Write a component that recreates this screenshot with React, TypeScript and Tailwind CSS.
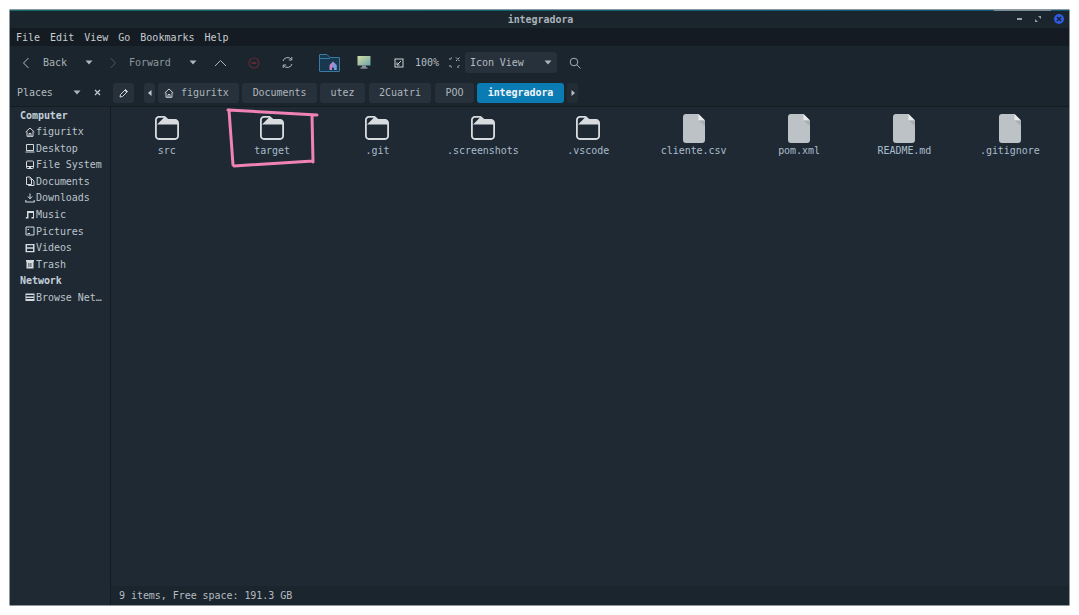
import React from "react";

const mono = "font-['DejaVu_Sans_Mono','Liberation_Mono',monospace]";

function Caret({ className = "" }: { className?: string }) {
  return (
    <svg width="8" height="5" viewBox="0 0 8 5" className={className}>
      <path d="M0.5 0.5h7L4 4.5z" fill="#aeb6bd" />
    </svg>
  );
}

function SideIcon({ name }: { name: string }) {
  const s = { fill: "none", stroke: "#d5dade", strokeWidth: 1 };
  const f = { fill: "#d5dade" };
  return (
    <svg width="10" height="10" viewBox="0 0 10 10" className="shrink-0">
      {name === "home" && <path d="M0.7 5 5 1l4.3 4M2 4.5v4.8h6V4.500M4 9.300V6.500h2v2.800" {...s} />}
      {name === "desktop" && <path d="M1.500 1.500h7v6h-7zM0.500 9h9" {...s} />}
      {name === "disk" && <path d="M2.500 1h5a1 1 0 0 1 1 1v5.500a1 1 0 0 1-1 1h-5a1 1 0 0 1-1-1V2a1 1 0 0 1 1-1zM1.500 6.500h7M4 7.500h2" {...s} />}
      {name === "docs" && <path d="M1.500 1H5L6.500 2.500V8.500H1.500zM4.500 3H7L9 5V9.500H3.500V8.500" {...s} />}
      {name === "down" && <path d="M5 .5v5M2.800 3.500 5 5.800 7.200 3.500M1 7 .5 9h9L9 7" {...s} />}
      {name === "music" && <path d="M2 1h7v7.500H6.500V7H8V3H3.500v5.500H0.800V7H2z" {...f} />}
      {name === "pic" && <path d="M1 1h8v8H1zM2.500 7.500h2.500M2.500 3.500h1.500" {...s} />}
      {name === "video" && <path fillRule="evenodd" d="M.5 1h9v8.300h-9zM2 2.300v2h6v-2zM2 5.800v2.200h6V5.800z" {...f} />}
      {name === "trash" && <path fillRule="evenodd" d="M1 1h8v1.800H8.500V9.500H1.500V2.800H1zM3.500 4v4h.8V4zM5.500 4v4h.8V4z" {...f} />}
      {name === "net" && <path fillRule="evenodd" d="M.5 1.500h9v7.500h-9zM1.300 6v1h7.400V6zM1.300 3v1.500h7.400V3z" {...f} />}
    </svg>
  );
}

function Folder() {
  return (
    <svg width="26" height="26" viewBox="0 0 26 26">
      <path d="M4.900 1.900H10.500L14 5H21a3 3 0 0 1 3.100 3V21a3 3 0 0 1-3 3H5a3 3 0 0 1-3.100-3V5a3 3 0 0 1 3-3.100z" fill="none" stroke="#d8dcdf" strokeWidth="1.800" strokeLinejoin="round" />
      <path d="M10.500 2 14 5H21a3 3 0 0 1 3.100 3V9.500H3z" fill="#d8dcdf" />
    </svg>
  );
}

function FileIcon() {
  return (
    <svg width="22" height="29" viewBox="0 0 22 29">
      <path d="M3 0h12.500L22 6.500V26a3 3 0 0 1-3 3H3a3 3 0 0 1-3-3V3a3 3 0 0 1 3-3z" fill="#bcc2c5" />
      <path d="M15.500 0 22 6.500h-6.500z" fill="#e9ebec" />
      <path d="M15.500 6.500H22V12z" fill="#a9afb3" />
    </svg>
  );
}

const places: [string, string][] = [
  ["home", "figuritx"],
  ["desktop", "Desktop"],
  ["disk", "File System"],
  ["docs", "Documents"],
  ["down", "Downloads"],
  ["music", "Music"],
  ["pic", "Pictures"],
  ["video", "Videos"],
  ["trash", "Trash"],
];

const items: [string, boolean][] = [
  ["src", true],
  ["target", true],
  [".git", true],
  [".screenshots", true],
  [".vscode", true],
  ["cliente.csv", false],
  ["pom.xml", false],
  ["README.md", false],
  [".gitignore", false],
];

const crumbs: [string, string][] = [
  ["Documents", "ml-[3px] w-[75px]"],
  ["utez", "ml-[3px] w-[45px]"],
  ["2Cuatri", "ml-[4px] w-[62px]"],
  ["POO", "ml-[4px] w-[39px]"],
];

export default function App() {
  return (
    <div className={`h-[615px] w-[1079px] overflow-hidden bg-white pl-[10px] pr-[10px] pt-[10px] ${mono} text-[10px] tracking-[-0.05px] text-[#c3cad0]`}>
      <div className="relative flex h-[595px] w-[1059px] flex-col bg-[#1f2933] shadow-[0_0_0_0.5px_#16313f]">
        <div className="h-px shrink-0 bg-gradient-to-r from-[#0e6b66] to-[#12567a]" />
        <div className="absolute left-[984px] top-0 h-px w-[57px] bg-[#7f8e98]" />
        {/* title bar */}
        <div className="flex h-[17px] shrink-0 items-center bg-[#1b252d]">
          <div className="w-[1059px] pl-[2px] text-center font-bold text-[#aab2b9]">integradora</div>
        </div>
        <div className="absolute right-[5px] top-[4px] flex items-center gap-[12px]">
          <div className="h-[1.500px] w-[5px] bg-[#9aa2a8]" />
          <svg width="6" height="6" viewBox="0 0 6 6" className="ml-[1px] mr-[1px]">
            <path d="M3 0h3v3zM0 3v3h3z" fill="#99a1a7" />
          </svg>
          <div className="flex h-[10px] w-[10px] items-center justify-center rounded-full bg-[#2f5be0]">
            <svg width="6" height="6" viewBox="0 0 6 6">
              <path d="M1 1l4 4M5 1 1 5" stroke="#16202c" strokeWidth="1.400" />
            </svg>
          </div>
        </div>
        {/* menu bar */}
        <div className="flex h-[18px] shrink-0 items-center gap-[10px] bg-[#141b22] pl-[6px] tracking-normal text-[#c6ccd1]">
          {["File", "Edit", "View", "Go", "Bookmarks", "Help"].map((m) => (
            <span key={m}>{m}</span>
          ))}
        </div>
        {/* toolbar */}
        <div className="flex h-[33px] shrink-0 items-center bg-[#1b252d] text-[#aab2b9]">
          <svg width="8" height="12" viewBox="0 0 8 12" className="ml-[12px]">
            <path d="M6.500 1 1.500 6l5 5" fill="none" stroke="#b5bcc2" strokeWidth="1" />
          </svg>
          <span className="ml-[13px] w-[24px]">Back</span>
          <Caret className="ml-[18px]" />
          <svg width="8" height="12" viewBox="0 0 8 12" className="ml-[16px]">
            <path d="M1.500 1l5 5-5 5" fill="none" stroke="#4c565f" strokeWidth="1" />
          </svg>
          <span className="ml-[12px] w-[42px] text-[#8e979e]">Forward</span>
          <Caret className="ml-[18px]" />
          <svg width="13" height="8" viewBox="0 0 13 8" className="ml-[17px]">
            <path d="M1 7 6.500 1.500 12 7" fill="none" stroke="#aeb6bc" strokeWidth="1" />
          </svg>
          <svg width="12" height="12" viewBox="0 0 12 12" className="ml-[21px]">
            <circle cx="6" cy="6" r="5" fill="none" stroke="#5e2a36" strokeWidth="1.200" />
            <path d="M3.500 6h5" stroke="#7a2d3c" strokeWidth="1.400" />
          </svg>
          <svg width="13" height="13" viewBox="0 0 13 13" className="ml-[21px]">
            <path d="M2 5A4.800 4.800 0 0 1 10.500 3.500M11 8A4.800 4.800 0 0 1 2.500 9.500" fill="none" stroke="#aeb6bc" strokeWidth="1" />
            <path d="M10.800 1v3h-3M2.200 12V9h3" fill="none" stroke="#aeb6bc" strokeWidth="1" />
          </svg>
          <svg width="21" height="18" viewBox="0 0 21 18" className="ml-[25px]">
            <path d="M1 .5h7l3 3h9a.5.500 0 0 1 .5.500v13a.5.500 0 0 1-.5.500H1a.5.500 0 0 1-.5-.500V1A.5.500 0 0 1 1 .5z" fill="#16394f" stroke="#3b7ba3" strokeWidth="1" />
            <path d="M.5 4.500H11" fill="none" stroke="#3b7ba3" strokeWidth="1" />
            <path d="M14 7.500 10.500 11v5h2.500v-2.500h2V16h2.500v-5z" fill="#c77fc0" />
            <path d="M14 7.500 17.500 11v5H15v-2.500h-1z" fill="#6f9fd8" />
          </svg>
          <svg width="14" height="15" viewBox="0 0 14 15" className="ml-[17px]">
            <defs>
              <linearGradient id="scr" x1="0" x2="1" y1="0" y2="1">
                <stop offset="0" stopColor="#d5dca5" />
                <stop offset="1" stopColor="#6aa5a8" />
              </linearGradient>
            </defs>
            <rect x="0.500" y="1" width="13" height="9.500" fill="url(#scr)" />
            <rect x="5" y="10.500" width="4" height="2" fill="#8b949a" />
            <rect x="3.500" y="12.500" width="7" height="1" fill="#b6bcc1" />
          </svg>
          <svg width="10" height="10" viewBox="0 0 10 10" className="ml-[23px]">
            <rect x="1" y="1" width="8" height="8" fill="none" stroke="#cfd4d8" strokeWidth="1" />
            <path d="M7 3 3.500 6.500M3 4.500V7h2.500" fill="none" stroke="#cfd4d8" strokeWidth="1" />
          </svg>
          <span className="ml-[11px] w-[24px] text-[#b6bdc3]">100%</span>
          <svg width="11" height="11" viewBox="0 0 11 11" className="ml-[10px]">
            <path d="M1 3V1h2M1 8v2h2M8 10h2V8M7 .5l3.500 3.500M10.500.5 7 4" fill="none" stroke="#b6bdc3" strokeWidth="1" strokeDasharray="2 1" />
          </svg>
          <div className="ml-[5px] flex h-[21px] w-[92px] items-center justify-between rounded-[3px] bg-[#27313b] pl-[5px] pr-[5px] text-[#b4bbc1]">
            <span>Icon View</span>
            <Caret />
          </div>
          <svg width="12" height="12" viewBox="0 0 12 12" className="ml-[12px]">
            <circle cx="5" cy="5" r="3.800" fill="none" stroke="#a6aeb4" strokeWidth="1" />
            <path d="M7.800 7.800 11.500 11.500" stroke="#a6aeb4" strokeWidth="1" />
          </svg>
        </div>
        {/* location row */}
        <div className="flex h-[27px] shrink-0 items-center bg-[#1b252d]">
          <span className="ml-[7px] w-[36px] text-[#b4bbc1]">Places</span>
          <Caret className="ml-[20px]" />
          <svg width="7" height="7" viewBox="0 0 7 7" className="ml-[13px]">
            <path d="M1 1l5 5M6 1 1 6" stroke="#c2c8cd" strokeWidth="1.300" />
          </svg>
          <div className="ml-[12px] flex h-[20px] w-[21px] items-center justify-center rounded-[3px] bg-[#27313b]">
            <svg width="10" height="10" viewBox="0 0 10 10">
              <path d="M1 9l.5-2.500L6.500 1.500l2 2-5 5z" fill="none" stroke="#d0d5d9" strokeWidth="1" />
              <path d="M5.500 2.500l2 2 1-1-2-2z" fill="#d0d5d9" />
            </svg>
          </div>
          <div className="ml-[10px] flex h-[20px] w-[11px] items-center justify-center rounded-[3px] bg-[#27313b]">
            <svg width="4" height="6" viewBox="0 0 4 6"><path d="M3.500 0v6L0 3z" fill="#c5cbd0" /></svg>
          </div>
          <div className="ml-[3px] flex h-[20px] w-[81px] items-center rounded-[3px] bg-[#27313b] pl-[6px] text-[#aeb6bc]">
            <svg width="10" height="10" viewBox="0 0 10 10">
              <path d="M.7 5 5 1l4.300 4M2 4.500v4.800h6V4.500M4 9.300V6.500h2v2.800" fill="none" stroke="#c8ced2" strokeWidth="1" />
            </svg>
            <span className="ml-[7px]">figuritx</span>
          </div>
          {crumbs.map(([c, w]) => (
            <div key={c} className={`flex h-[20px] ${w} items-center justify-center rounded-[3px] bg-[#27313b] text-[#aeb6bc]`}>
              {c}
            </div>
          ))}
          <div className="ml-[3px] flex h-[20px] w-[87px] items-center justify-center rounded-[3px] bg-[#0a7bb3] font-bold text-[#f0f5f8]">
            integradora
          </div>
          <div className="ml-[3px] flex h-[20px] w-[11px] items-center justify-center rounded-[3px] bg-[#222c35]">
            <svg width="4" height="6" viewBox="0 0 4 6"><path d="M.5 0v6L4 3z" fill="#b9c0c5" /></svg>
          </div>
        </div>
        <div className="h-px shrink-0 bg-[#141b22]" />
        {/* main */}
        <div className="flex min-h-0 flex-1">
          <aside className="w-[101px] shrink-0 border-r border-[#141b22] bg-[#1f2933] text-[#bcc4ca]">
            <div className="flex h-[16.500px] items-center pl-[10px] font-bold text-[#c3d0da]">Computer</div>
            {places.map(([i, t]) => (
              <div key={t} className="flex h-[16.560px] items-center gap-[1px] pl-[15px]">
                <SideIcon name={i} />
                <span>{t}</span>
              </div>
            ))}
            <div className="flex h-[16.500px] items-center pl-[10px] font-bold text-[#c3d0da]">Network</div>
            <div className="flex h-[16.500px] items-center gap-[1px] pl-[15px]">
              <SideIcon name="net" />
              <span>Browse Net…</span>
            </div>
          </aside>
          <div className="relative flex min-w-0 flex-1 flex-col">
            <div className="grid flex-1 grid-cols-[repeat(9,105.4px)] content-start pl-[3px] pt-[6px]">
              {items.map(([n, folder]) => (
                <div key={n} className="flex h-[50px] flex-col items-center">
                  <div className="flex h-[30px] items-center justify-center">
                    {folder ? <Folder /> : <FileIcon />}
                  </div>
                  <span className="whitespace-nowrap text-[#a8bccb]">{n}</span>
                </div>
              ))}
            </div>
            <div className="flex h-[19px] shrink-0 items-center bg-[#1b252d] pl-[8px] text-[#b4bbc1]">
              9 items, Free space: 191.3 GB
            </div>
            {/* hand-drawn annotation */}
            <svg width="210" height="62" viewBox="0 0 210 62" className="absolute left-0 top-0">
              <path d="M117 3 206 8M118 3 122 58M123 59 202 54M201 8 202 55" fill="none" stroke="#f083b5" strokeWidth="3" strokeLinecap="round" />
            </svg>
          </div>
        </div>
      </div>
    </div>
  );
}
